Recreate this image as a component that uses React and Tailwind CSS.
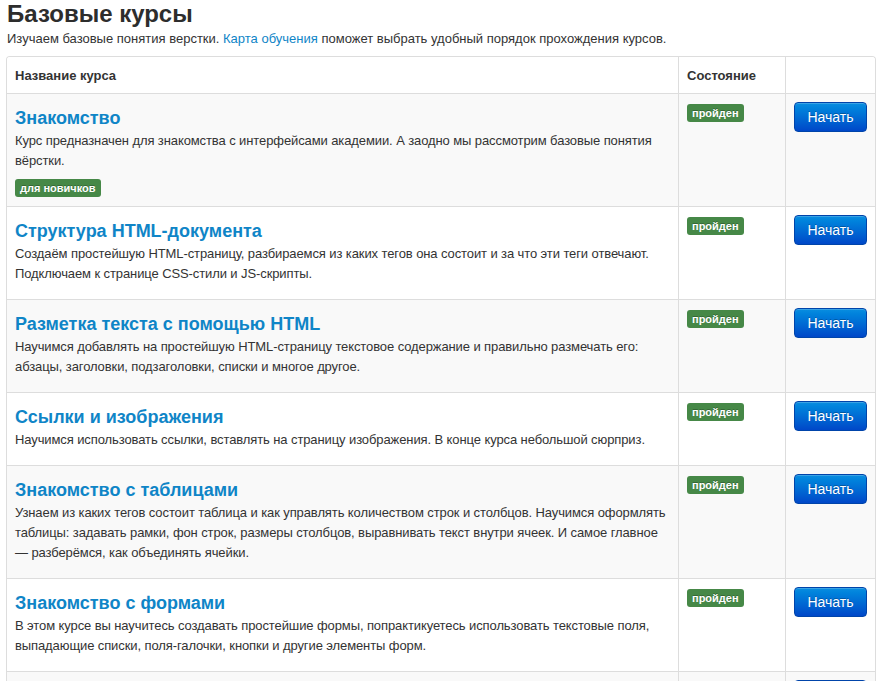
import React from "react";

const courses = [
    {
        title: "Знакомство",
        desc: "Курс предназначен для знакомства с интерфейсами академии. А заодно мы рассмотрим базовые понятия вёрстки.",
        tag: "для новичков",
    },
    {
        title: "Структура HTML-документа",
        desc: "Создаём простейшую HTML-страницу, разбираемся из каких тегов она состоит и за что эти теги отвечают. Подключаем к странице CSS-стили и JS-скрипты.",
    },
    {
        title: "Разметка текста с помощью HTML",
        desc: "Научимся добавлять на простейшую HTML-страницу текстовое содержание и правильно размечать его: абзацы, заголовки, подзаголовки, списки и многое другое.",
    },
    {
        title: "Ссылки и изображения",
        desc: "Научимся использовать ссылки, вставлять на страницу изображения. В конце курса небольшой сюрприз.",
    },
    {
        title: "Знакомство с таблицами",
        desc: "Узнаем из каких тегов состоит таблица и как управлять количеством строк и столбцов. Научимся оформлять таблицы: задавать рамки, фон строк, размеры столбцов, выравнивать текст внутри ячеек. И самое главное — разберёмся, как объединять ячейки.",
    },
    {
        title: "Знакомство с формами",
        desc: "В этом курсе вы научитесь создавать простейшие формы, попрактикуетесь использовать текстовые поля, выпадающие списки, поля-галочки, кнопки и другие элементы форм.",
    },
    {
        title: "Селекторы",
        desc: "Разберёмся с основными видами селекторов.",
    },
];

const Label = ({ children }) => (
    <span className="inline-block rounded-[3px] bg-[#468847] px-[5px] py-[2px] text-[11px] leading-[14px] font-bold text-white [text-shadow:0_-1px_0_rgba(0,0,0,0.25)]">
        {children}
    </span>
);

const CourseRow = ({ course, striped }) => (
    <div
        className={`grid grid-cols-[671px_107px_1fr] border-t border-[#dddddd] ${
            striped ? "bg-[#f9f9f9]" : "bg-white"
        }`}
    >
        <div className="px-[8px] pt-[8px] pb-[7px]">
            <a href="#" className="mt-[6px] mb-[3px] block text-[18px] leading-[20px] font-bold text-[#0f85c7]">
                {course.title}
            </a>
            <p className="mb-[8px] text-[13px] leading-[20px] tracking-[-0.1px] text-[#333333]">{course.desc}</p>
            {course.tag && (
                <div className="mt-[3px] mb-[2px] flex">
                    <Label>{course.tag}</Label>
                </div>
            )}
        </div>
        <div className="flex items-start border-l border-[#dddddd] px-[8px] pt-[10px]">
            <Label>пройден</Label>
        </div>
        <div className="flex items-start border-l border-[#dddddd] px-[8px] pt-[8px]">
            <button className="h-[30px] w-[73px] rounded-[4px] border border-[#0044aa] bg-gradient-to-b from-[#0a8ee0] to-[#0047c8] text-[14px] text-white shadow-[inset_0_1px_0_rgba(255,255,255,0.2)] [text-shadow:0_-1px_0_rgba(0,0,0,0.25)]">
                Начать
            </button>
        </div>
    </div>
);

export default function App() {
    return (
        <div className="h-[681px] overflow-hidden bg-white pt-[3px] pl-[6px] pr-[12px] font-['Liberation_Sans',Arial,sans-serif] text-[#333333]">
            <h1 className="mt-[-3px] pl-[1px] text-[24px] leading-[27px] font-bold text-[#2d2d2d]">Базовые курсы</h1>
            <p className="mt-[2px] pl-[1px] text-[13px] leading-[20px]">
                Изучаем базовые понятия верстки.{" "}
                <a href="#" className="text-[#0f85c7]">
                    Карта обучения
                </a>{" "}
                поможет выбрать удобный порядок прохождения курсов.
            </p>
            <div className="mt-[7px] w-[870px] overflow-hidden rounded-t-[4px] border border-b-0 border-[#dddddd]">
                <div className="grid h-[36px] grid-cols-[671px_107px_1fr] bg-white text-[13px] font-bold">
                    <div className="flex items-center px-[8px] pt-[2px]">Название курса</div>
                    <div className="flex items-center border-l border-[#dddddd] px-[8px] pt-[2px]">Состояние</div>
                    <div className="border-l border-[#dddddd]"></div>
                </div>
                {courses.map((c, i) => (
                    <CourseRow key={i} course={c} striped={i % 2 === 0} />
                ))}
            </div>
        </div>
    );
}
